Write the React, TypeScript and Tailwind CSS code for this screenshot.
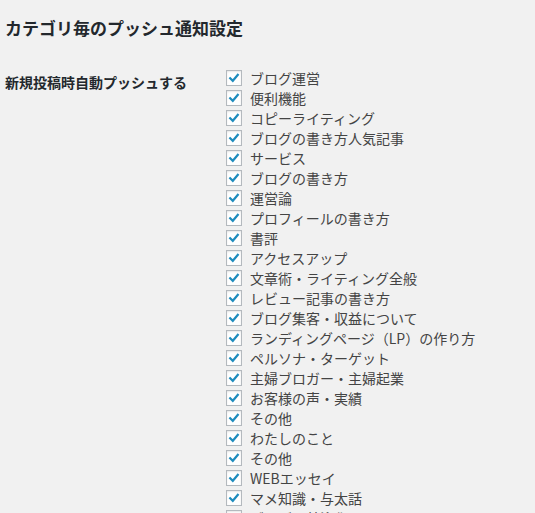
const categories = [
  'ブログ運営',
  '便利機能',
  'コピーライティング',
  'ブログの書き方人気記事',
  'サービス',
  'ブログの書き方',
  '運営論',
  'プロフィールの書き方',
  '書評',
  'アクセスアップ',
  '文章術・ライティング全般',
  'レビュー記事の書き方',
  'ブログ集客・収益について',
  'ランディングページ（LP）の作り方',
  'ペルソナ・ターゲット',
  '主婦ブロガー・主婦起業',
  'お客様の声・実績',
  'その他',
  'わたしのこと',
  'その他',
  'WEBエッセイ',
  'マメ知識・与太話',
  'ブログの外注化',
]

function CheckBox() {
  return (
    <span className="flex h-4 w-4 shrink-0 items-center justify-center border border-[#b4b9be] bg-white shadow-[inset_0_1px_2px_rgba(0,0,0,0.1)]">
      <svg width="12" height="12" viewBox="0 0 12 12" fill="none">
        <path d="M2.2 6.2 L4.8 8.8 L9.8 2.8" stroke="#1e8cbe" strokeWidth="2.2" strokeLinecap="square" />
      </svg>
    </span>
  )
}

export default function App() {
  return (
    <div
      className="h-[513px] overflow-hidden bg-[#f1f1f1] pl-[5px] text-[#444]"
      style={{ fontFamily: '"Noto Sans CJK JP", "Noto Sans", sans-serif' }}
    >
      <h2 className="pt-[16px] text-[17px] font-bold leading-[24px] text-[#23282d]">
        カテゴリ毎のプッシュ通知設定
      </h2>
      <div className="mt-[28px] flex">
        <div className="w-[221px] shrink-0 pt-[4px] text-[14px] font-bold leading-[20px] text-[#23282d]">
          新規投稿時自動プッシュする
        </div>
        <ul className="flex flex-col">
          {categories.map((name, i) => (
            <li key={i} className="flex h-5 items-center gap-[8px] text-[14px] leading-[20px]">
              <CheckBox />
              <span>{name}</span>
            </li>
          ))}
        </ul>
      </div>
    </div>
  )
}
